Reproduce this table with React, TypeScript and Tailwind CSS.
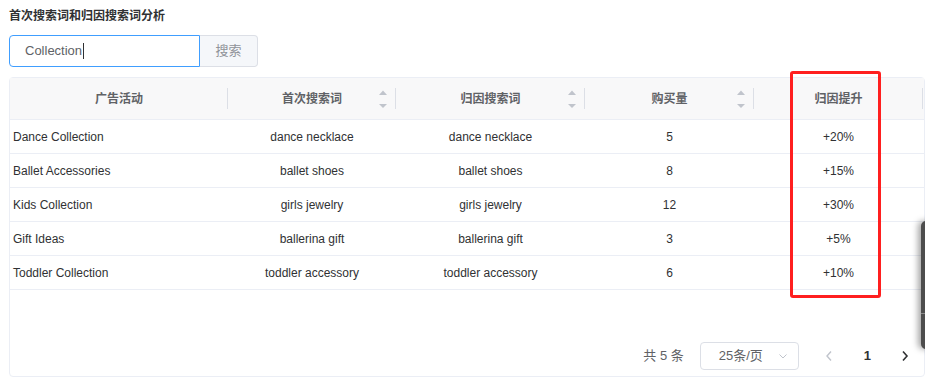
import React from "react";

type Row = {
  campaign: string;
  first: string;
  attributed: string;
  qty: number;
  lift: string;
};

const rows: Row[] = [
  { campaign: "Dance Collection", first: "dance necklace", attributed: "dance necklace", qty: 5, lift: "+20%" },
  { campaign: "Ballet Accessories", first: "ballet shoes", attributed: "ballet shoes", qty: 8, lift: "+15%" },
  { campaign: "Kids Collection", first: "girls jewelry", attributed: "girls jewelry", qty: 12, lift: "+30%" },
  { campaign: "Gift Ideas", first: "ballerina gift", attributed: "ballerina gift", qty: 3, lift: "+5%" },
  { campaign: "Toddler Collection", first: "toddler accessory", attributed: "toddler accessory", qty: 6, lift: "+10%" },
];

const cols = "grid grid-cols-[218px_168px_189px_169px_169px_1fr]";

function SortIcon() {
  return (
    <svg width="10" height="20" viewBox="0 0 10 20" className="absolute right-[8px] top-1/2 -translate-y-1/2">
      <path d="M1 6 L5 1.5 L9 6 Z" fill="#c0c4cc" />
      <path d="M1 15 L5 19 L9 15 Z" fill="#c0c4cc" />
    </svg>
  );
}

function HeadCell({ label, sortable, last }: { label: string; sortable?: boolean; last?: boolean }) {
  return (
    <div className="relative flex h-[41px] items-center justify-center">
      <span>{label}</span>
      {sortable && <SortIcon />}
      {!last && <div className="absolute right-0 top-[10px] h-[21px] w-px bg-[#dcdfe6]" />}
    </div>
  );
}

export default function App() {
  return (
    <div
      className="relative h-[380px] w-[925px] overflow-hidden bg-white"
      style={{ fontFamily: '"Liberation Sans", Arial, "Noto Sans CJK SC", sans-serif' }}
    >
      <div className="px-[9px] pt-[8px]">
        <h3 className="text-[12px] font-bold leading-[16px] text-[#303133]">首次搜索词和归因搜索词分析</h3>

        {/* search bar */}
        <div className="mt-[11px] flex h-[32px] w-[249px]">
          <div className="flex flex-1 items-center rounded-l-[4px] border border-[#409eff] pl-[15px] text-[13px] text-[#606266]">
            <span>Collection</span>
            <span className="ml-px h-[16px] w-px bg-[#303133]" />
          </div>
          <button className="w-[58px] rounded-r-[4px] border border-l-0 border-[#dcdfe6] bg-[#f5f7fa] text-[13px] text-[#909399]">
            搜索
          </button>
        </div>

        {/* table */}
        <div className="mt-[10px] flex h-[300px] w-[916px] flex-col rounded-[4px] border border-[#ebeef5]">
          <div className={`${cols} border-b border-[#ebeef5] bg-[#f8f8f9] text-[12px] font-semibold text-[#606266]`}>
            <HeadCell label="广告活动" />
            <HeadCell label="首次搜索词" sortable />
            <HeadCell label="归因搜索词" sortable />
            <HeadCell label="购买量" sortable />
            <HeadCell label="归因提升" />
            <div className="h-[41px]" />
          </div>
          {rows.map((r) => (
            <div
              key={r.campaign}
              className={`${cols} h-[34px] items-center border-b border-[#ebeef5] text-[12px] text-[#303133]`}
            >
              <div className="pl-[3px]">{r.campaign}</div>
              <div className="text-center">{r.first}</div>
              <div className="text-center">{r.attributed}</div>
              <div className="text-center">{r.qty}</div>
              <div className="text-center">{r.lift}</div>
              <div />
            </div>
          ))}

          {/* pagination */}
          <div className="mt-auto mb-[6px] flex items-center justify-end pr-[14px] text-[13px] text-[#606266]">
            <span className="mr-[16px]">共 5 条</span>
            <div className="flex h-[28px] w-[99px] items-center justify-between rounded-[4px] border border-[#dcdfe6] pl-[18px] pr-[10px]">
              <span className="text-[#606266]">25条/页</span>
              <svg width="10" height="10" viewBox="0 0 10 10">
                <path d="M1.5 3.5 L5 7 L8.5 3.5" fill="none" stroke="#c0c4cc" strokeWidth="1" />
              </svg>
            </div>
            <svg width="10" height="12" viewBox="0 0 10 12" className="ml-[25px]">
              <path d="M7 1.5 L3 6 L7 10.5" fill="none" stroke="#c0c4cc" strokeWidth="1.4" />
            </svg>
            <span className="ml-[30px] font-bold text-[#303133]">1</span>
            <svg width="10" height="12" viewBox="0 0 10 12" className="ml-[29px]">
              <path d="M3 1.5 L7 6 L3 10.5" fill="none" stroke="#303133" strokeWidth="1.6" />
            </svg>
          </div>
        </div>
      </div>

      {/* annotation box */}
      <div className="absolute left-[790px] top-[71px] h-[227px] w-[91px] rounded-[3px] border-[3px] border-[#ff1f1f]" />

      {/* floating side handle */}
      <div className="absolute left-[921px] top-[221px] h-[128px] w-[12px] rounded-l-[5px] bg-[#4d4d4d] shadow-[-3px_0_6px_rgba(0,0,0,0.35)]">
        <div className="mt-[92px] h-px w-full bg-[#8a8a8a]" />
      </div>
    </div>
  );
}
